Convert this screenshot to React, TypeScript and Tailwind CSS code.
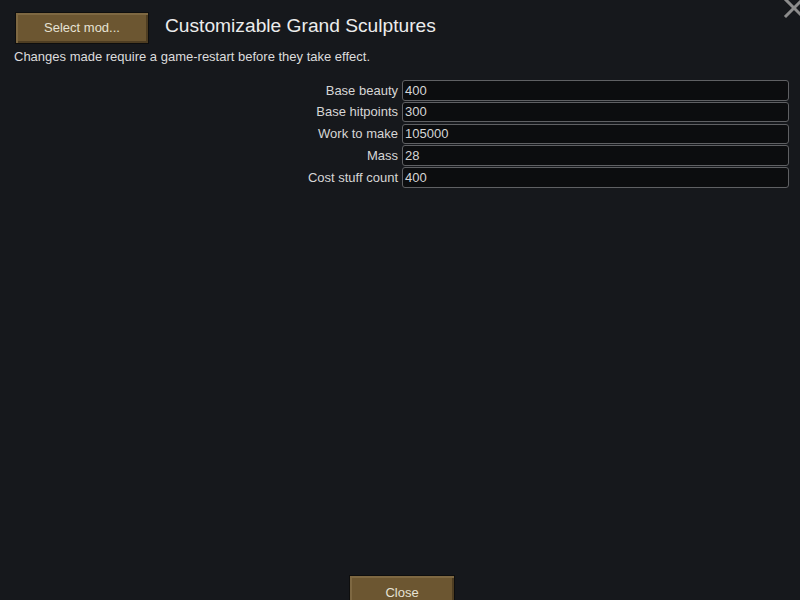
import React from "react";

const fields = [
  { label: "Base beauty", value: "400" },
  { label: "Base hitpoints", value: "300" },
  { label: "Work to make", value: "105000" },
  { label: "Mass", value: "28" },
  { label: "Cost stuff count", value: "400" },
];

function WoodButton({ children, className }: { children: React.ReactNode; className: string }) {
  return (
    <div
      className={
        "flex items-center justify-center border border-[#0e0e0e] bg-[#6c5631] text-[13px] text-[#e6e2d4] shadow-[inset_2px_2px_0_#7e6842,inset_-2px_-2px_0_#4e3d22] " +
        className
      }
    >
      {children}
    </div>
  );
}

export default function App() {
  return (
    <div
      className="relative flex h-[600px] w-[800px] flex-col overflow-hidden bg-[#16181c]"
      style={{ fontFamily: '"Liberation Sans", Arial, sans-serif' }}
    >
      <svg
        className="absolute left-[783px] top-[-3px]"
        width="22"
        height="22"
        viewBox="0 0 22 22"
      >
        <path d="M3 3 L19 19 M19 3 L3 19" stroke="#8c8c8c" strokeWidth="3" strokeLinecap="square" />
      </svg>

      <div className="flex items-start pl-[15px] pt-[12px]">
        <WoodButton className="h-[32px] w-[134px]">Select mod...</WoodButton>
        <div className="ml-[16px] mt-[4px] text-[19.2px] leading-none text-[#ececec]">
          Customizable Grand Sculptures
        </div>
      </div>

      <div className="mt-[5px] pl-[14px] text-[13px] leading-[16px] text-[#dcdcdc]">
        Changes made require a game-restart before they take effect.
      </div>

      <div className="mt-[15px] flex flex-col gap-[1.25px]">
        {fields.map((f) => (
          <div key={f.label} className="flex h-[20.5px] items-center">
            <div className="w-[398px] text-right text-[13px] text-[#d6d6d6]">{f.label}</div>
            <div className="ml-[4px] flex h-[20.5px] w-[387px] items-center rounded-[3px] border-[1.5px] border-[#5f6063] bg-[#0c0d0f] pl-[2px] text-[13px] text-[#d6d6d6]">
              {f.value}
            </div>
          </div>
        ))}
      </div>

      <div className="flex-1" />

      <div className="mb-[-9px] flex justify-center pl-[4px]">
        <WoodButton className="h-[34px] w-[106px] pt-[1px]">Close</WoodButton>
      </div>
    </div>
  );
}
